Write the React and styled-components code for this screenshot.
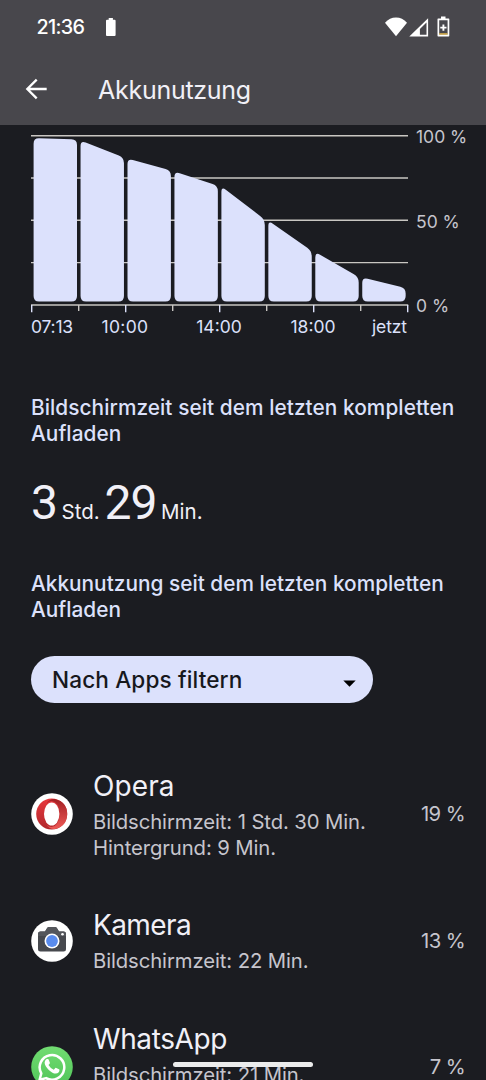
import React from "react";
import styled, { createGlobalStyle } from "styled-components";

const GlobalStyle = createGlobalStyle`
  * { box-sizing: border-box; }
  body {
    margin: 0;
    background: #1b1c21;
    color: #f1f0f7;
    font-family: Inter, Roboto, sans-serif;
    overflow: hidden;
  }
`;

const Screen = styled.div`
  position: relative;
  display: flex;
  flex-direction: column;
  width: 486px;
  height: 1080px;
  overflow: hidden;
`;

const Header = styled.header`
  flex: none;
  height: 125px;
  background: #48474c;
`;

const StatusBar = styled.div`
  display: flex;
  align-items: center;
  height: 54px;
  padding: 0 36px 0 36.5px;
  color: #fff;
`;

const Clock = styled.span`
  width: 69.5px;
  font-size: 19.8px;
  font-weight: 500;
  letter-spacing: -0.7px;
`;

const StatusIcons = styled.div`
  display: flex;
  margin-left: auto;
`;

const TitleBar = styled.div`
  display: flex;
  align-items: center;
  height: 70px;
  padding-left: 24px;
`;

const BackButton = styled.button`
  display: flex;
  width: 74px;
  padding: 0;
  border: 0;
  background: none;
`;

const Title = styled.h1`
  margin: 0;
  padding-top: 1px;
  font-size: 25px;
  font-weight: 400;
  line-height: 32px;
  letter-spacing: -0.27px;
`;

const Content = styled.main`
  flex: none;
  padding-left: 31px;
`;

const ChartRow = styled.div`
  display: flex;
  height: 191px;
  padding-top: 1px;
`;

const ChartSvg = styled.svg`
  display: block;
  flex: none;
`;

const PercentAxis = styled.div`
  display: flex;
  flex-direction: column;
  justify-content: space-between;
  margin-left: 7px;
  padding-top: 1px;
  color: #c6c5cd;
  font-size: 17.5px;
  line-height: 20px;
`;

const TimeAxis = styled.div`
  display: grid;
  grid-template-columns: repeat(8, 47px);
  margin-top: 1px;
  color: #dce1fb;
  font-size: 17.5px;
  line-height: 20px;
`;

const TimeLabel = styled.span`
  grid-column: span ${(p) => p.$span};
  justify-self: ${(p) => p.$align || "center"};
  letter-spacing: ${(p) => p.$tracking || 0}px;
  white-space: nowrap;
`;

const SectionTitle = styled.h2`
  width: 440px;
  margin: ${(p) => p.$top}px 0 0;
  color: #dce1fb;
  font-size: 20.8px;
  font-weight: 500;
  line-height: 26px;
  letter-spacing: ${(p) => p.$tracking}px;
`;

const Duration = styled.div`
  display: flex;
  align-items: baseline;
  height: 60px;
  margin-top: 26px;
`;

const DurationNumber = styled.span`
  font-family: Roboto, sans-serif;
  font-size: 48px;
  line-height: 60px;
  letter-spacing: -1px;
`;

const DurationUnit = styled.span`
  margin: 0 5px 0 4.5px;
  font-size: 20.5px;
`;

const FilterSelect = styled.button`
  display: flex;
  align-items: center;
  justify-content: space-between;
  width: 342px;
  height: 47px;
  margin-top: 33.5px;
  padding: 0 17px 1px 21px;
  border: 0;
  border-radius: 24px;
  background: #dce1fc;
  color: #17181d;
  font-family: inherit;
  font-size: 22.6px;
  font-weight: 500;
  letter-spacing: 0.12px;
`;

const AppList = styled.ul`
  margin: 41.25px 0 0;
  padding: 0;
  list-style: none;
`;

const AppRow = styled.li`
  display: grid;
  grid-template-columns: 62px 1fr auto;
  align-items: center;
  height: ${(p) => p.$height}px;
  padding-right: 21px;
`;

const AppText = styled.div`
  align-self: start;
  padding-top: 23.5px;
`;

const AppName = styled.div`
  margin-bottom: 5px;
  font-size: 28px;
  line-height: 36px;
  letter-spacing: ${(p) => p.$tracking}px;
`;

const AppDetail = styled.div`
  color: #c6c5cd;
  font-size: 20.3px;
  line-height: 26px;
  letter-spacing: -0.1px;
`;

const AppShare = styled.div`
  color: #c6c5cd;
  font-size: 20.3px;
  line-height: 26px;
  letter-spacing: -0.6px;
`;

const HomeIndicator = styled.div`
  position: absolute;
  bottom: 13px;
  left: 173px;
  width: 140px;
  height: 5px;
  border-radius: 3px;
  background: #ececec;
`;

const BatteryFull = () => (
  <svg width="10" height="18" viewBox="0 0 10 18" fill="#fff">
    <path d="M2.7 0h4.2v1.7H8.6Q9.6 1.7 9.6 2.7V16.9Q9.6 17.9 8.6 17.9H1Q0 17.9 0 16.9V2.7Q0 1.7 1 1.7H2.7Z" />
  </svg>
);

const StatusGlyphs = () => (
  <svg width="66" height="22" viewBox="384 15.5 66 22">
    <path d="M385 22.2Q389.6 17 396 17T407 22.2L396 35.7Z" fill="#fff" />
    <path d="M409.3 36 428.1 17.7V36ZM419.9 34.3h6.6V21.9l-6.6 6.5Z" fill="#fff" fillRule="evenodd" />
    <path
      d="M441 16h4.5v2h3.2q.6 0 .6.6v16.7q0 .6-.6.6h-10.6q-.6 0-.6-.6V18.6q0-.6.6-.6H441ZM439.2 19.8V34h8.4V19.8Z"
      fill="#fff"
      fillRule="evenodd"
    />
    <path d="M439.2 32.8h8.4v1.3h-8.4Z" fill="#f0c04a" />
    <path d="M443.4 24v6.2M440.3 27.1h6.2" stroke="#fff" strokeWidth="1.9" />
  </svg>
);

const BackArrow = () => (
  <svg width="24" height="24" viewBox="0 0 24 24" fill="none" stroke="#fff" strokeWidth="2.3">
    <path d="M22.7 12H3.5M12.7 2.6 3.3 12l9.400 9.400" />
  </svg>
);

const CaretSvg = styled.svg`
  margin-top: 9px;
`;

const Caret = () => (
  <CaretSvg width="13" height="7" viewBox="0 0 13 7">
    <path d="M.3.5h12.400L6.500 6.700Z" fill="#000" />
  </CaretSvg>
);

/* Each pair is the top edge of a bar at its left and right side. */
const bars = [
  [138.2, 139.5],
  [140.5, 157.5],
  [158.5, 170.5],
  [171.5, 185.7],
  [186.5, 219.5],
  [220.5, 251],
  [252, 277],
  [277.5, 288],
];
const BOTTOM = 301.4;

function roundedPath(points, d) {
  const toward = (a, b) => {
    const len = Math.hypot(b[0] - a[0], b[1] - a[1]);
    return [a[0] + ((b[0] - a[0]) * d) / len, a[1] + ((b[1] - a[1]) * d) / len];
  };
  return (
    points
      .map((p, i) => {
        const before = toward(p, points[(i + points.length - 1) % points.length]);
        const after = toward(p, points[(i + 1) % points.length]);
        return `${i ? "L" : "M"}${before.join(" ")}Q${p.join(" ")} ${after.join(" ")}`;
      })
      .join("") + "Z"
  );
}

const BatteryChart = () => (
  <ChartSvg width="378" height="187" viewBox="31 126 378 187">
    {[135.7, 178, 220.3, 262.6].map((y) => (
      <path key={y} d={`M31 ${y}H408`} stroke="#c9c6c2" strokeWidth="1.4" />
    ))}
    <path d="M31 305H408.2" stroke="#c9c6c2" strokeWidth="1.4" />
    {Array.from({ length: 9 }, (_, i) => (
      <path
        key={i}
        d={`M${31.7 + i * 47} 305v${i % 2 ? 6 : 7.3}`}
        stroke={i % 2 ? "#c9c6c2" : "#dce1fb"}
        strokeWidth="1.4"
      />
    ))}
    {bars.map(([left, right], i) => {
      const x0 = 33.6 + i * 46.95;
      const x1 = x0 + 43.4;
      return (
        <path
          key={i}
          d={roundedPath([[x0, BOTTOM], [x0, left], [x1, right], [x1, BOTTOM]], 5.5)}
          fill="#dce1fc"
        />
      );
    })}
  </ChartSvg>
);

const OperaIcon = () => (
  <svg width="42" height="42" viewBox="0 0 42 42">
    <defs>
      <linearGradient id="operaRing" x1="0" y1="0" x2="0" y2="1">
        <stop offset="0" stopColor="#e8383d" />
        <stop offset="1" stopColor="#b0282c" />
      </linearGradient>
      <linearGradient id="operaSide" x1="0" y1="0" x2="0" y2="1">
        <stop offset="0" stopColor="#a32024" />
        <stop offset="1" stopColor="#ee5a57" />
      </linearGradient>
    </defs>
    <circle cx="21" cy="21" r="20.8" fill="#fff" />
    <circle cx="20.7" cy="21" r="15.500" fill="url(#operaRing)" />
    <path
      d="M15.5 10.500Q18 5.800 24 6Q36.200 9 36.200 21T24 36Q18 36.200 15.500 31.500Q17.500 34 20.500 34Q28.500 33 28.500 21T20.500 8Q17.500 8 15.500 10.500Z"
      fill="url(#operaSide)"
    />
    <ellipse cx="20.7" cy="21" rx="7.700" ry="11.500" fill="#fff" />
  </svg>
);

const CameraIcon = () => (
  <svg width="42" height="42" viewBox="0 0 42 42">
    <circle cx="21" cy="21" r="20.8" fill="#fff" />
    <path
      d="M9.500 11.500H14L16 8.300Q16.700 7 18 7H24Q25.300 7 26 8.300L28 11.500H32.500Q35 11.500 35 14V29Q35 31.500 32.500 31.500H9.500Q7 31.500 7 29V14Q7 11.500 9.500 11.500Z"
      fill="#47494e"
    />
    <path d="M7 16V14Q7 11.500 9.500 11.500H14L16 8.300Q16.700 7 18 7H24Q25.300 7 26 8.300L28 11.500H32.500Q35 11.500 35 14V16Z" fill="#54565b" />
    <circle cx="21" cy="21" r="7.500" fill="#fff" />
    <circle cx="21" cy="21" r="5.900" fill="#5a8cee" />
    <circle cx="31.500" cy="14.300" r="1.300" fill="#fff" />
  </svg>
);

const WhatsAppIcon = () => (
  <svg width="42" height="42" viewBox="0 0 42 42">
    <defs>
      <linearGradient id="chatDisc" x1="0" y1="0" x2="0" y2="1">
        <stop offset="0" stopColor="#72dc72" />
        <stop offset="1" stopColor="#4fc458" />
      </linearGradient>
    </defs>
    <circle cx="21" cy="21" r="20.800" fill="url(#chatDisc)" />
    <path
      d="M8.600 33.800 10.300 27.400A12.300 12.300 0 1 1 15.100 32.100Z"
      fill="none"
      stroke="#fff"
      strokeWidth="2.500"
      strokeLinejoin="round"
    />
    <path
      d="M15.300 12.800Q16 12.200 17 12.500Q17.400 12.600 17.700 13.300L18.900 16.200Q19 16.800 18.600 17.300L17.500 18.600Q19.300 21.800 22.800 23.300L24.300 21.500Q24.700 21.100 25.300 21.400L28 22.700Q28.600 23 28.500 23.600Q28.300 26.800 24.800 27.100Q21.800 27.200 17.800 23.500Q13.900 19.500 13.600 16.300Q13.700 14.200 15.300 12.800Z"
      transform="translate(0 0.500)"
      fill="#fff"
    />
  </svg>
);

const apps = [
  {
    name: "Opera",
    icon: OperaIcon,
    details: ["Bildschirmzeit: 1 Std. 30 Min.", "Hintergrund: 9 Min."],
    share: "19 %",
    height: 139.5,
    tracking: 0.1,
  },
  {
    name: "Kamera",
    icon: CameraIcon,
    details: ["Bildschirmzeit: 22 Min."],
    share: "13 %",
    height: 113.5,
    tracking: -0.6,
  },
  {
    name: "WhatsApp",
    icon: WhatsAppIcon,
    details: ["Bildschirmzeit: 21 Min."],
    share: "7 %",
    height: 139.5,
    tracking: -0.4,
  },
];

export default function App() {
  return (
    <Screen>
      <GlobalStyle />
      <Header>
        <StatusBar>
          <Clock>21:36</Clock>
          <BatteryFull />
          <StatusIcons>
            <StatusGlyphs />
          </StatusIcons>
        </StatusBar>
        <TitleBar>
          <BackButton aria-label="Zurück">
            <BackArrow />
          </BackButton>
          <Title>Akkunutzung</Title>
        </TitleBar>
      </Header>
      <Content>
        <ChartRow>
          <BatteryChart />
          <PercentAxis>
            <span>100 %</span>
            <span>50 %</span>
            <span>0 %</span>
          </PercentAxis>
        </ChartRow>
        <TimeAxis>
          <TimeLabel $span={1} $align="start" $tracking={-0.2}>07:13</TimeLabel>
          <TimeLabel $span={2} $tracking={0.3}>10:00</TimeLabel>
          <TimeLabel $span={2}>14:00</TimeLabel>
          <TimeLabel $span={2}>18:00</TimeLabel>
          <TimeLabel $span={1} $align="end" $tracking={-0.1}>jetzt</TimeLabel>
        </TimeAxis>
        <SectionTitle $top={57.5} $tracking={0.07}>
          Bildschirmzeit seit dem letzten kompletten Aufladen
        </SectionTitle>
        <Duration>
          <DurationNumber>3</DurationNumber>
          <DurationUnit>Std.</DurationUnit>
          <DurationNumber>29</DurationNumber>
          <DurationUnit>Min.</DurationUnit>
        </Duration>
        <SectionTitle $top={38} $tracking={0.02}>
          Akkunutzung seit dem letzten kompletten Aufladen
        </SectionTitle>
        <FilterSelect>
          Nach Apps filtern
          <Caret />
        </FilterSelect>
        <AppList>
          {apps.map(({ name, icon: Icon, details, share, height, tracking }) => (
            <AppRow key={name} $height={height}>
              <Icon />
              <AppText>
                <AppName $tracking={tracking}>{name}</AppName>
                {details.map((line) => (
                  <AppDetail key={line}>{line}</AppDetail>
                ))}
              </AppText>
              <AppShare>{share}</AppShare>
            </AppRow>
          ))}
        </AppList>
      </Content>
      <HomeIndicator />
    </Screen>
  );
}
